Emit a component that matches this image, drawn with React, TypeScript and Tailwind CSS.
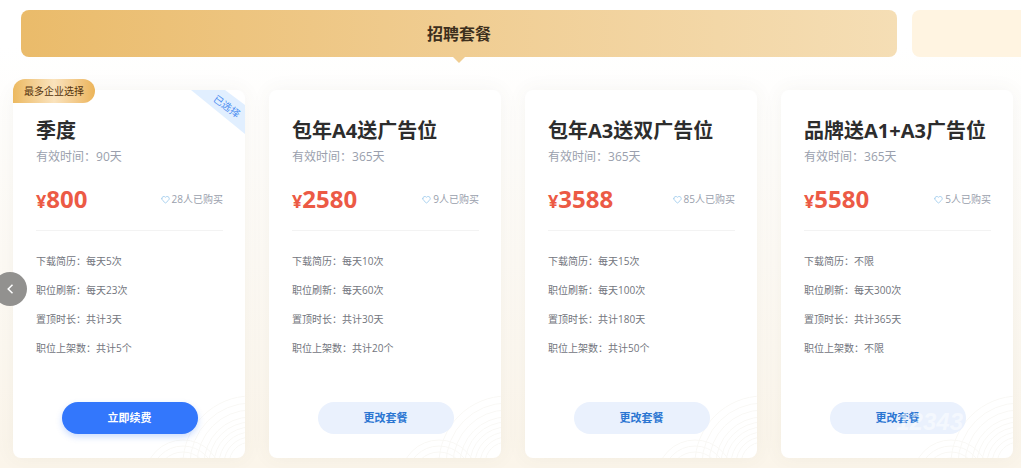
import { Heart } from "lucide-react";

type Plan = {
  name: string;
  days: string;
  price: string;
  buyers: string;
  features: string[];
  action: string;
  current?: boolean;
};

const plans: Plan[] = [
  {
    name: "季度",
    days: "90天",
    price: "800",
    buyers: "28",
    features: ["下载简历：每天5次", "职位刷新：每天23次", "置顶时长：共计3天", "职位上架数：共计5个"],
    action: "立即续费",
    current: true,
  },
  {
    name: "包年A4送广告位",
    days: "365天",
    price: "2580",
    buyers: "9",
    features: ["下载简历：每天10次", "职位刷新：每天60次", "置顶时长：共计30天", "职位上架数：共计20个"],
    action: "更改套餐",
  },
  {
    name: "包年A3送双广告位",
    days: "365天",
    price: "3588",
    buyers: "85",
    features: ["下载简历：每天15次", "职位刷新：每天100次", "置顶时长：共计180天", "职位上架数：共计50个"],
    action: "更改套餐",
  },
  {
    name: "品牌送A1+A3广告位",
    days: "365天",
    price: "5580",
    buyers: "5",
    features: ["下载简历：不限", "职位刷新：每天300次", "置顶时长：共计365天", "职位上架数：不限"],
    action: "更改套餐",
  },
];

const largeRings = [22, 27, 32, 37, 42, 47, 54, 61, 68];
const smallRings = [20, 26, 32, 38];

function Ripples() {
  return (
    <svg
      className="pointer-events-none absolute right-0 bottom-0 h-[72px] w-[110px] rounded-br-lg"
      viewBox="0 0 110 72"
      fill="none"
      stroke="#f9f8f5"
      aria-hidden="true"
    >
      {largeRings.map((r) => (
        <circle key={r} cx="116" cy="78" r={r} />
      ))}
      {smallRings.map((r) => (
        <circle key={r} cx="48" cy="92" r={r} />
      ))}
    </svg>
  );
}

function PlanCard({ plan, last }: { plan: Plan; last: boolean }) {
  return (
    <article className="relative flex min-w-0 flex-col rounded-lg bg-white pt-[26px] pr-[22px] pb-6 pl-[23px] shadow-[0_0_20px_rgba(80,80,70,0.06)]">
      <Ripples />
      {plan.current && (
        <>
          <span className="absolute -top-[11px] left-0 rounded-t-xl rounded-br-xl bg-linear-to-r from-[#ecb95f] via-[#fae3bd] to-[#ecb458] px-[11px] text-[10px] leading-6 text-[#54330d]">
            最多企业选择
          </span>
          <span className="absolute top-0 right-0 h-11 w-[54px] overflow-hidden rounded-tr-lg">
            <svg className="absolute inset-0 h-full w-full" viewBox="0 0 54 44" aria-hidden="true">
              <path d="M0 0H34L54 15V44Z" fill="#e1efff" />
            </svg>
            <span className="absolute top-[9px] left-[21px] rotate-[36deg] text-[10px] leading-[14px] whitespace-nowrap text-[#4a8cf0]">
              已选择
            </span>
          </span>
        </>
      )}
      <h2 className="text-xl leading-[29px] font-bold whitespace-nowrap text-[#2d2d2d]">{plan.name}</h2>
      <p className="text-xs leading-6 text-[#9a9fad]">有效时间：{plan.days}</p>
      <div className="mt-3 flex h-9 items-center justify-between">
        <p className="text-2xl leading-9 font-bold text-[#ec5a45]">
          <span className="text-lg">¥</span>
          {plan.price}
        </p>
        <p className="flex items-center gap-[2px] text-[10px] leading-4 text-[#9a9fad]">
          <Heart className="size-[9px] text-[#8fc3ea]" aria-hidden="true" />
          {plan.buyers}人已购买
        </p>
      </div>
      <ul className="mt-[13px] border-t border-[#f3f3f3] pt-4 text-[10px] leading-[29px] text-[#72757d]">
        {plan.features.map((feature) => (
          <li key={feature}>{feature}</li>
        ))}
      </ul>
      <button
        type="button"
        className={
          plan.current
            ? "relative mt-[39px] h-8 w-[136px] self-center rounded-full bg-[#3377fc] text-[11px] font-bold text-white shadow-[0_3px_6px_rgba(51,119,252,0.25)]"
            : "relative mt-[39px] h-8 w-[136px] self-center rounded-full bg-[#eaf1fd] text-[11px] font-bold text-[#2b76d2]"
        }
      >
        {plan.action}
      </button>
      {last && (
        <span className="pointer-events-none absolute right-[50px] bottom-[22px] font-['Liberation_Sans',sans-serif] text-2xl leading-7 font-bold text-white/50 italic">
          12343
        </span>
      )}
    </article>
  );
}

export default function App() {
  return (
    <main className="relative overflow-hidden bg-linear-to-b from-white from-10% to-[#fbf5ea] pt-[10px] pb-[10px] font-['Open_Sans','Noto_Sans_CJK_SC',sans-serif]">
      <nav className="flex gap-[15px] pl-[21px]" aria-label="套餐类型">
        <button
          type="button"
          className="relative h-[47px] flex-1 rounded-lg bg-linear-to-r from-[#eabb6a] via-[#f0cd92] to-[#f5deb5] text-base font-bold text-[#3d2f1d]"
        >
          招聘套餐
          <svg className="absolute top-full left-1/2 h-[6px] w-3 -translate-x-1/2" viewBox="0 0 12 6" aria-hidden="true">
            <path d="M0 0H12L6 6Z" fill="#f0cd92" />
          </svg>
        </button>
        <button type="button" aria-label="其他套餐" className="h-[47px] w-[109px] rounded-l-lg bg-[#fff4e1]" />
      </nav>
      <section className="mt-[33px] grid grid-cols-4 gap-6 pr-2 pl-[13px]">
        {plans.map((plan, i) => (
          <PlanCard key={plan.name} plan={plan} last={i === plans.length - 1} />
        ))}
      </section>
      <button
        type="button"
        aria-label="上一页"
        className="absolute top-[272px] -left-[7px] flex size-[34px] items-center justify-center rounded-full bg-[#92918f] text-white"
      >
        <svg className="h-[10px] w-[7px]" viewBox="0 0 7 10" fill="none" stroke="currentColor" strokeWidth="1.5" aria-hidden="true">
          <path d="M5.5 0.8L1.2 5L5.5 9.2" />
        </svg>
      </button>
    </main>
  );
}
